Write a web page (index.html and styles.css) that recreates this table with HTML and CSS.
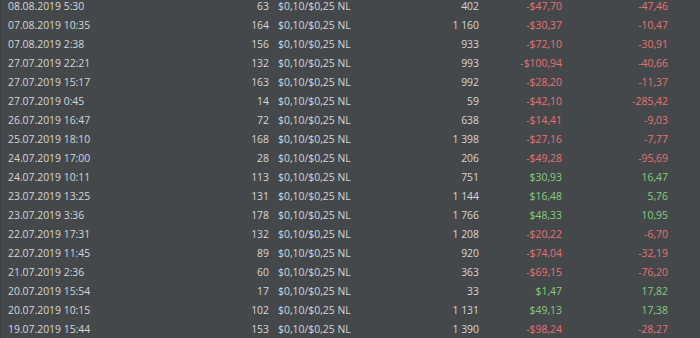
FILE: index.html
```html
<!DOCTYPE html>
<html>
<head>
<meta charset="utf-8">
<link rel="stylesheet" href="styles.css">
</head>
<body>
<div class="table">
  <div class="row"><span class="date">08.08.2019 5:30</span><span class="num">63</span><span class="game">$0,10/$0,25 NL</span><span class="num">402</span><span class="num neg">-$47,70</span><span class="num neg">-47,46</span></div>
  <div class="row"><span class="date">07.08.2019 10:35</span><span class="num">164</span><span class="game">$0,10/$0,25 NL</span><span class="num">1 160</span><span class="num neg">-$30,37</span><span class="num neg">-10,47</span></div>
  <div class="row"><span class="date">07.08.2019 2:38</span><span class="num">156</span><span class="game">$0,10/$0,25 NL</span><span class="num">933</span><span class="num neg">-$72,10</span><span class="num neg">-30,91</span></div>
  <div class="row"><span class="date">27.07.2019 22:21</span><span class="num">132</span><span class="game">$0,10/$0,25 NL</span><span class="num">993</span><span class="num neg">-$100,94</span><span class="num neg">-40,66</span></div>
  <div class="row"><span class="date">27.07.2019 15:17</span><span class="num">163</span><span class="game">$0,10/$0,25 NL</span><span class="num">992</span><span class="num neg">-$28,20</span><span class="num neg">-11,37</span></div>
  <div class="row"><span class="date">27.07.2019 0:45</span><span class="num">14</span><span class="game">$0,10/$0,25 NL</span><span class="num">59</span><span class="num neg">-$42,10</span><span class="num neg">-285,42</span></div>
  <div class="row"><span class="date">26.07.2019 16:47</span><span class="num">72</span><span class="game">$0,10/$0,25 NL</span><span class="num">638</span><span class="num neg">-$14,41</span><span class="num neg">-9,03</span></div>
  <div class="row"><span class="date">25.07.2019 18:10</span><span class="num">168</span><span class="game">$0,10/$0,25 NL</span><span class="num">1 398</span><span class="num neg">-$27,16</span><span class="num neg">-7,77</span></div>
  <div class="row"><span class="date">24.07.2019 17:00</span><span class="num">28</span><span class="game">$0,10/$0,25 NL</span><span class="num">206</span><span class="num neg">-$49,28</span><span class="num neg">-95,69</span></div>
  <div class="row"><span class="date">24.07.2019 10:11</span><span class="num">113</span><span class="game">$0,10/$0,25 NL</span><span class="num">751</span><span class="num pos">$30,93</span><span class="num pos">16,47</span></div>
  <div class="row"><span class="date">23.07.2019 13:25</span><span class="num">131</span><span class="game">$0,10/$0,25 NL</span><span class="num">1 144</span><span class="num pos">$16,48</span><span class="num pos">5,76</span></div>
  <div class="row"><span class="date">23.07.2019 3:36</span><span class="num">178</span><span class="game">$0,10/$0,25 NL</span><span class="num">1 766</span><span class="num pos">$48,33</span><span class="num pos">10,95</span></div>
  <div class="row"><span class="date">22.07.2019 17:31</span><span class="num">132</span><span class="game">$0,10/$0,25 NL</span><span class="num">1 208</span><span class="num neg">-$20,22</span><span class="num neg">-6,70</span></div>
  <div class="row"><span class="date">22.07.2019 11:45</span><span class="num">89</span><span class="game">$0,10/$0,25 NL</span><span class="num">920</span><span class="num neg">-$74,04</span><span class="num neg">-32,19</span></div>
  <div class="row"><span class="date">21.07.2019 2:36</span><span class="num">60</span><span class="game">$0,10/$0,25 NL</span><span class="num">363</span><span class="num neg">-$69,15</span><span class="num neg">-76,20</span></div>
  <div class="row"><span class="date">20.07.2019 15:54</span><span class="num">17</span><span class="game">$0,10/$0,25 NL</span><span class="num">33</span><span class="num pos">$1,47</span><span class="num pos">17,82</span></div>
  <div class="row"><span class="date">20.07.2019 10:15</span><span class="num">102</span><span class="game">$0,10/$0,25 NL</span><span class="num">1 131</span><span class="num pos">$49,13</span><span class="num pos">17,38</span></div>
  <div class="row"><span class="date">19.07.2019 15:44</span><span class="num">153</span><span class="game">$0,10/$0,25 NL</span><span class="num">1 390</span><span class="num neg">-$98,24</span><span class="num neg">-28,27</span></div>
</div>
</body>
</html>
```
FILE: styles.css
```css
html, body {
  margin: 0;
  padding: 0;
  background: #45484b;
  height: 100%;
  overflow: hidden;
}
.table {
  margin-top: -3px;
  border-left: 1px solid #3a3d40;
  font-family: "Open Sans", sans-serif;
  font-size: 10.4px;
  color: #d6d6d6;
}
.row {
  display: grid;
  grid-template-columns: 219px 49px 131px 79px 83px 106px 1fr;
  height: 19px;
  line-height: 19px;
  white-space: nowrap;
}
.date {
  padding-left: 7px;
}
.num {
  text-align: right;
}
.game {
  padding-left: 9px;
}
.neg {
  color: #e57373;
}
.pos {
  color: #85cc7f;
}
```
